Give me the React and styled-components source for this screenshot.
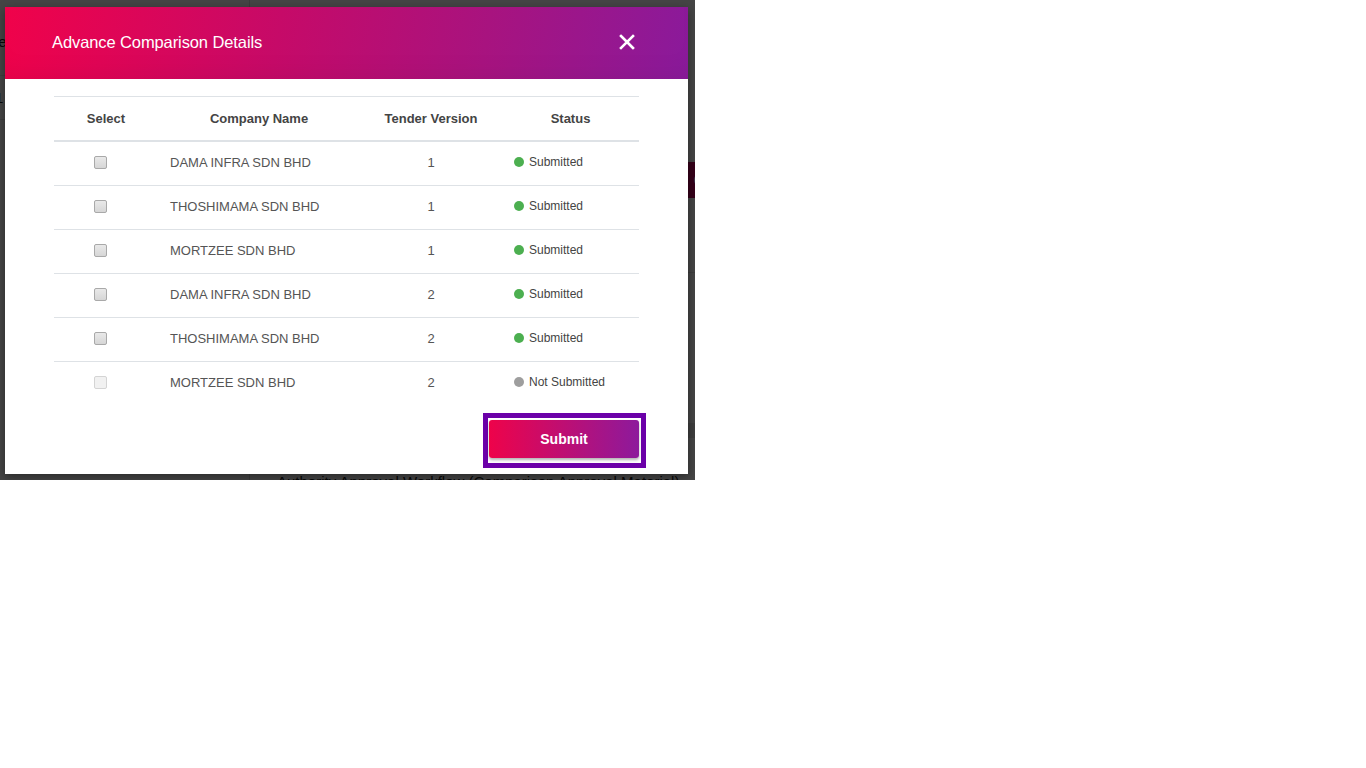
import React from 'react';
import styled, { createGlobalStyle } from 'styled-components';

const GlobalStyle = createGlobalStyle`
  html, body {
    margin: 0;
    padding: 0;
    background: #ffffff;
    font-family: "Liberation Sans", Arial, sans-serif;
  }
`;

const rows = [
  { company: 'DAMA INFRA SDN BHD', version: 1, submitted: true },
  { company: 'THOSHIMAMA SDN BHD', version: 1, submitted: true },
  { company: 'MORTZEE SDN BHD', version: 1, submitted: true },
  { company: 'DAMA INFRA SDN BHD', version: 2, submitted: true },
  { company: 'THOSHIMAMA SDN BHD', version: 2, submitted: true },
  { company: 'MORTZEE SDN BHD', version: 2, submitted: false },
];

const Stage = styled.div`
  position: relative;
  width: 695px;
  height: 480px;
  overflow: hidden;
  background: #ffffff;
`;

// page sitting behind the dialog
const Page = styled.div`
  display: grid;
  grid-template-columns: 250px 1fr;
  height: 100%;
  color: #222;
  font-size: 14px;
`;

const Sidebar = styled.div`
  padding-top: 32px;
  border-right: 1px solid #ddd;
  font-size: 15px;
  line-height: 20px;
`;

const SideItem = styled.div`
  height: 44px;
  padding-top: ${p => p.pt || 0}px;
  box-sizing: border-box;
  border-bottom: 1px solid #e4e4e4;
  margin-left: -5px;
`;

const Main = styled.div`
  display: flex;
  flex-direction: column;
  padding: 0 0 0 27px;
`;

const MainRow = styled.div`
  display: flex;
  justify-content: ${p => (p.start ? 'flex-start' : 'flex-end')};
  align-items: ${p => (p.start ? 'flex-end' : 'center')};
  flex: none;
  height: ${p => p.h || 44}px;
  border-bottom: ${p => (p.line ? '1px solid #e2e2e2' : 'none')};
`;

const PageButton = styled.div`
  background: #c2005e;
  color: #fff;
  height: 36px;
  line-height: 36px;
  padding: 0 14px;
  margin-right: -70px;
  font-size: 14px;
`;

const GreyBar = styled.div`
  background: #e6e6e6;
  height: 15px;
  width: 100%;
  margin-right: -20px;
`;

const PageText = styled.div`
  font-size: ${p => p.size || 14}px;
  font-weight: ${p => (p.bold ? 700 : 400)};
  margin-right: ${p => p.mr || 0}px;
  white-space: nowrap;
`;

const Overlay = styled.div`
  position: absolute;
  inset: 0;
  background: rgba(0, 0, 0, 0.73);
`;

const Modal = styled.div`
  position: absolute;
  top: 7px;
  left: 5px;
  width: 683px;
  background: #ffffff;
  display: flex;
  flex-direction: column;
  box-shadow: 0 3px 9px rgba(0, 0, 0, 0.4);
`;

const Header = styled.div`
  height: 72px;
  box-sizing: border-box;
  display: flex;
  align-items: center;
  justify-content: space-between;
  padding: 0 51px 2px 47px;
  background: linear-gradient(100deg, #f0024a 0%, #c60a68 40%, #a8137f 70%, #8a1a9b 100%);
  box-shadow: inset 0 -20px 30px -20px rgba(0, 0, 0, 0.08);
`;

const Title = styled.div`
  color: #ffffff;
  font-size: 16.5px;
  letter-spacing: -0.1px;
`;

const CloseButton = styled.button`
  border: 0;
  background: transparent;
  padding: 0;
  width: 20px;
  height: 20px;
  display: flex;
  align-items: center;
  justify-content: center;
  cursor: pointer;
`;

const Body = styled.div`
  padding: 17px 49px 6px;
  display: flex;
  flex-direction: column;
`;

const Table = styled.table`
  width: 585px;
  border-collapse: collapse;
  table-layout: fixed;
`;

const Th = styled.th`
  width: ${p => p.w}px;
  height: 43px;
  padding: 0;
  font-size: 13px;
  font-weight: 700;
  color: #444;
  text-align: center;
  border-top: 1px solid #dee2e6;
  border-bottom: 2px solid #dee2e6;
  vertical-align: middle;
`;

const Tr = styled.tr`
  & + & td {
    border-top: 1px solid #dee2e6;
  }
`;

const Td = styled.td`
  height: 41px;
  padding: 0 ${p => p.pr || 0}px 2px ${p => p.pl || 0}px;
  font-size: 13px;
  color: #555;
  text-align: ${p => p.align || 'center'};
  vertical-align: middle;
`;

const Check = styled.input.attrs({ type: 'checkbox' })`
  appearance: none;
  -webkit-appearance: none;
  display: block;
  margin: 0 auto;
  width: 13px;
  height: 13px;
  border-radius: 2px;
  border: 1px solid #a9a9a9;
  background: linear-gradient(#e9e9e9, #d6d6d6);
  box-sizing: border-box;

  &:disabled {
    border-color: #d4d4d4;
    background: #f1f1f1;
  }
`;

const Status = styled.span`
  display: inline-flex;
  align-items: center;
  gap: 5px;
  font-size: 12px;
  color: #444;
`;

const Dot = styled.span`
  width: 10px;
  height: 10px;
  border-radius: 50%;
  background: ${p => (p.on ? '#4caf50' : '#9e9e9e')};
`;

const Footer = styled.div`
  display: flex;
  justify-content: flex-end;
  padding-top: 8px;
  margin-right: -7px;
`;

// focus ring drawn around the submit button
const FocusRing = styled.div`
  display: flex;
  border: 5px solid #6b00a8;
  padding: 2px 2px 5px 1px;
  background: #ffffff;
`;

const SubmitButton = styled.button`
  width: 150px;
  height: 38px;
  border: 0;
  border-radius: 3px;
  color: #ffffff;
  font-family: "Liberation Sans", Arial, sans-serif;
  font-size: 14px;
  font-weight: 700;
  background: linear-gradient(to right, #ee034a, #8d1a9c);
  box-shadow: 0 2px 3px rgba(0, 0, 0, 0.3);
  outline: none;
  cursor: pointer;
`;

export default function App() {
  return (
    <>
      <GlobalStyle />
      <Stage>
        <Page>
          <Sidebar>
            <SideItem>le</SideItem>
            <SideItem pt={12}>1</SideItem>
          </Sidebar>
          <Main>
            <MainRow h={158} />
            <MainRow h={44}>
              <PageButton>Compare</PageButton>
            </MainRow>
            <MainRow h={70} line>
              <PageText mr={-10}>D</PageText>
            </MainRow>
            <MainRow h={75}>
              <PageText size={16} bold mr={-12}>R</PageText>
            </MainRow>
            <MainRow h={72} />
            <MainRow h={20}>
              <GreyBar />
            </MainRow>
            <MainRow h={50} start>
              <PageText size={15}>Authority Approval Workflow (Comparison Approval Material)</PageText>
            </MainRow>
          </Main>
        </Page>
        <Overlay />
        <Modal>
          <Header>
            <Title>Advance Comparison Details</Title>
            <CloseButton aria-label="Close">
              <svg width="16" height="16" viewBox="0 0 16 16">
                <path d="M2 2 L14 14 M14 2 L2 14" stroke="#fff" strokeWidth="2.6" strokeLinecap="square" />
              </svg>
            </CloseButton>
          </Header>
          <Body>
            <Table>
              <thead>
                <tr>
                  <Th w={104}>Select</Th>
                  <Th w={202}>Company Name</Th>
                  <Th w={142}>Tender Version</Th>
                  <Th w={137}>Status</Th>
                </tr>
              </thead>
              <tbody>
                {rows.map((r, i) => (
                  <Tr key={i}>
                    <Td pr={12}>
                      <Check disabled={!r.submitted} />
                    </Td>
                    <Td align="left" pl={12}>{r.company}</Td>
                    <Td>{r.version}</Td>
                    <Td align="left" pl={12}>
                      <Status>
                        <Dot on={r.submitted ? 1 : 0} />
                        {r.submitted ? 'Submitted' : 'Not Submitted'}
                      </Status>
                    </Td>
                  </Tr>
                ))}
              </tbody>
            </Table>
            <Footer>
              <FocusRing>
                <SubmitButton>Submit</SubmitButton>
              </FocusRing>
            </Footer>
          </Body>
        </Modal>
      </Stage>
    </>
  );
}
